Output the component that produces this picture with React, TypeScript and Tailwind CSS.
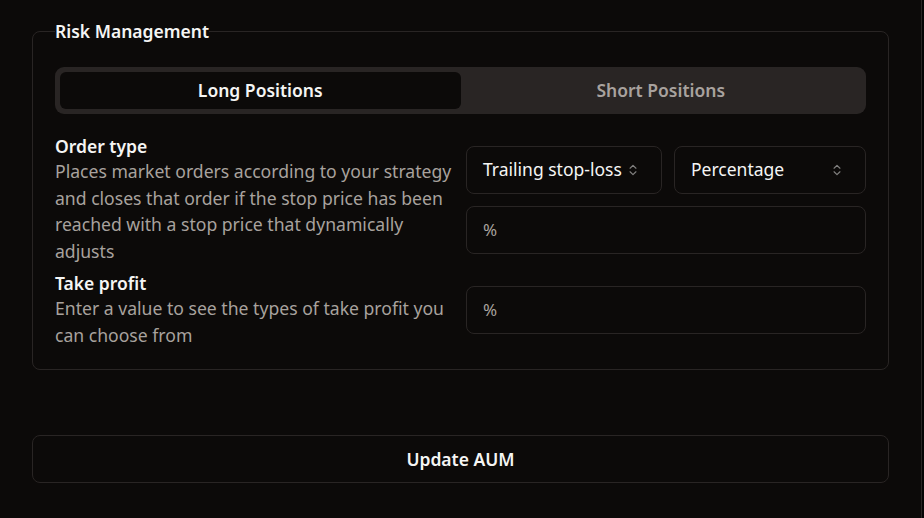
import React from "react";
import { ChevronsUpDown } from "lucide-react";

function Select({ label }: { label: string }) {
  return (
    <button className="flex h-12 w-full items-center justify-between rounded-lg border border-[#292524] bg-[#0c0a09] pl-4 pr-[21px] text-[17.5px] text-[#f5f5f4]">
      <span>{label}</span>
      <ChevronsUpDown className="h-[14px] w-[14px] opacity-50" strokeWidth={2} />
    </button>
  );
}

function Input() {
  return (
    <div className="flex h-12 w-full items-center rounded-lg border border-[#292524] bg-[#0c0a09] px-4 text-[17px] text-[#a8a29e]">
      %
    </div>
  );
}

export default function App() {
  return (
    <div
      className="flex h-[518px] w-[924px] bg-[#050505]"
      style={{ fontFamily: '"Noto Sans", "Open Sans", sans-serif' }}
    >
      <div className="flex h-full w-[922px] flex-col border-r border-[#292524] bg-[#0c0a09] pl-8 pr-8 pt-[19px]">
        <fieldset className="rounded-lg border border-[#292524] px-[22px] pb-[21px] pt-[24px]">
          <legend className="px-0 text-[17.5px] font-semibold leading-6 text-[#f5f5f4]">Risk Management</legend>
          <div className="grid h-[47px] grid-cols-2 rounded-[9px] bg-[#292524] p-[5px]">
            <div className="flex items-center justify-center rounded-md bg-[#0c0a09] text-[17.5px] font-semibold text-[#f5f5f4]">
              Long Positions
            </div>
            <div className="flex items-center justify-center text-[17.5px] font-semibold text-[#a8a29e]">
              Short Positions
            </div>
          </div>
          <div className="mt-[20px] grid grid-cols-2 items-center gap-x-[11px]">
            <div>
              <div className="text-[17.5px] font-semibold leading-6 text-[#f5f5f4]">Order type</div>
              <div className="text-[17.6px] leading-[26.5px] text-[#a8a29e]">
                Places market orders according to your strategy and closes that order if the stop price has been reached with a stop price that dynamically adjusts
              </div>
            </div>
            <div className="flex flex-col gap-3 pt-[1px]">
              <div className="grid grid-cols-[196px_1fr] gap-3">
                <Select label="Trailing stop-loss" />
                <Select label="Percentage" />
              </div>
              <Input />
            </div>
          </div>
          <div className="mt-[7px] grid grid-cols-2 items-center gap-x-[11px]">
            <div>
              <div className="text-[17.5px] font-semibold leading-6 text-[#f5f5f4]">Take profit</div>
              <div className="text-[17.6px] leading-[26.5px] text-[#a8a29e]">
                Enter a value to see the types of take profit you can choose from
              </div>
            </div>
            <Input />
          </div>
        </fieldset>
        <button className="mt-[65px] flex h-12 w-full items-center justify-center rounded-lg border border-[#292524] bg-[#0c0a09] text-[17.5px] font-semibold text-[#f5f5f4]">
          Update AUM
        </button>
      </div>
    </div>
  );
}
